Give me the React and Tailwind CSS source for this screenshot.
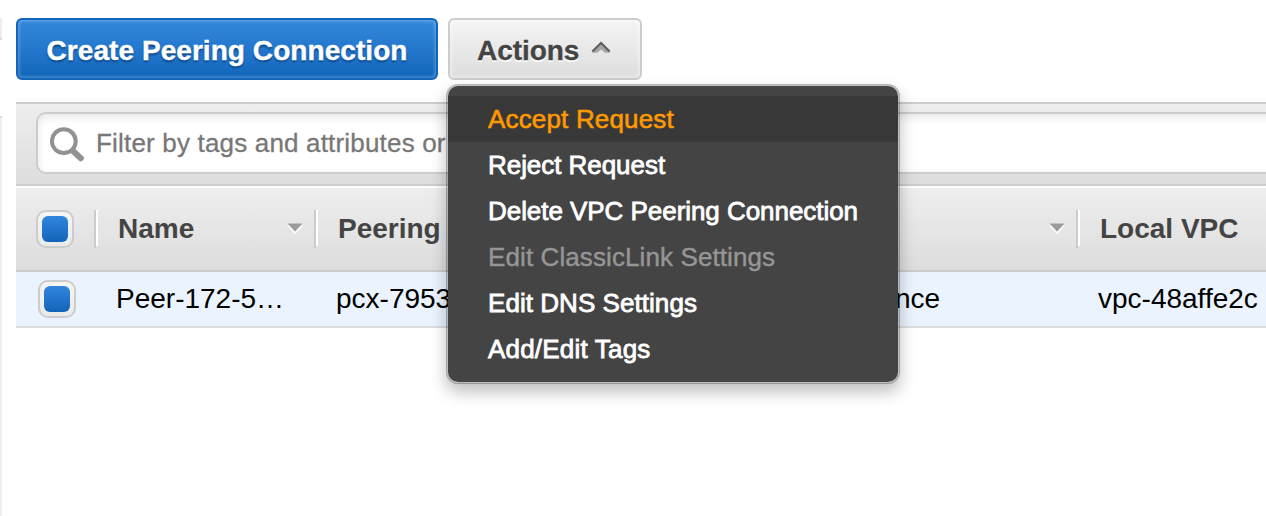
import React from "react";

const menuItems = [
  { label: "Accept Request", style: "bg-[#383838] text-[#ff9900] tracking-[0.17px] [-webkit-text-stroke:0.6px_#ff9900]" },
  { label: "Reject Request", style: "text-white tracking-[-0.05px] [-webkit-text-stroke:0.8px_white]" },
  { label: "Delete VPC Peering Connection", style: "text-white tracking-[-0.05px] [-webkit-text-stroke:0.8px_white]" },
  { label: "Edit ClassicLink Settings", style: "text-[#969696] tracking-[0.1px] [-webkit-text-stroke:0.4px_#969696]" },
  { label: "Edit DNS Settings", style: "text-white tracking-[0.05px] [-webkit-text-stroke:0.8px_white]" },
  { label: "Add/Edit Tags", style: "text-white tracking-[0.2px] [-webkit-text-stroke:0.8px_white]" },
];

function Checkbox() {
  return (
    <div className="flex size-[38px] shrink-0 items-center justify-center rounded-[10px] border-2 border-[#cccccc] bg-linear-to-b from-[#f6f6f6] to-[#eaeaea]">
      <div className="size-[26px] rounded-[6px] bg-linear-to-b from-[#3186dd] to-[#1264bb]" />
    </div>
  );
}

function SortArrow() {
  return (
    <svg className="shrink-0" width="16" height="12" viewBox="0 0 16 12">
      <path d="M0 2.2H16L8 11.5Z" fill="#fafafa" />
      <path d="M0.5 0.5H15.5L8 8.5Z" fill="#9b9b9b" />
    </svg>
  );
}

function Divider() {
  return (
    <div className="flex h-[38px] w-1 shrink-0">
      <div className="h-[38px] w-0.5 bg-[#cccccc]" />
      <div className="h-9 w-0.5 bg-white" />
    </div>
  );
}

function ActionsMenu() {
  return (
    <div className="absolute top-[66px] -left-0.5 z-10 w-[454px] rounded-[12px] border-2 border-black/25 bg-[#444444] bg-clip-padding py-[10px] shadow-[0_8px_16px_rgba(0,0,0,0.25)]">
      {menuItems.map((item) => (
        <div key={item.label} className={`h-[46px] pl-10 text-[26px] leading-[46px] font-normal whitespace-nowrap ${item.style}`}>
          {item.label}
        </div>
      ))}
    </div>
  );
}

export default function App() {
  return (
    <div className="flex h-[516px] w-[1266px] overflow-hidden bg-white font-['Liberation_Sans',Arial,sans-serif]">
      <aside className="flex w-4 shrink-0 flex-col pt-[18px]">
        <div className="h-[22px] w-0.5 border-b-2 border-[#dddddd] bg-[#eeeeee]" />
        <div className="mt-[76px] w-0.5 flex-1 border-t-2 border-[#dddddd] bg-[#eeeeee]" />
      </aside>

      <main className="w-[1250px] shrink-0 pt-[18px]">
        <div className="flex gap-[10px]">
          <button className="h-[62px] w-[422px] rounded-[6px] border-2 border-[#1166bb] bg-linear-to-b from-[#3388dd] to-[#1166bb] pt-1 text-[28px] font-bold tracking-[0.06px] whitespace-nowrap text-white shadow-[inset_0_0_4px_rgba(255,255,255,0.45)] [-webkit-text-stroke:0.4px_white] [text-shadow:0_2px_2px_#0a4484]">
            Create Peering Connection
          </button>
          <div className="relative">
            <button className="flex h-[62px] w-[194px] items-center rounded-[6px] border-2 border-[#cccccc] bg-linear-to-b from-[#f5f5f5] to-[#dddddd] pl-[27px] text-[28px] font-bold text-[#444444] shadow-[inset_0_0_5px_rgba(255,255,255,0.8)] [text-shadow:0_2px_0_white]">
              <span className="pt-1 tracking-[-0.05px] [-webkit-text-stroke:0.3px_#444444]">Actions</span>
              <svg className="mb-1 ml-3" width="20" height="14" viewBox="0 0 20 14">
                <path d="M1 12.8L10 4L19 12.8H14L10 9.5L6 12.8Z" fill="#a6a6a6" />
                <path d="M1.3 11.5L10 3L18.7 11.5" fill="none" stroke="#5e5e5e" strokeWidth="2.2" />
              </svg>
            </button>
            <ActionsMenu />
          </div>
        </div>

        <section className="mt-[22px] border-y-2 border-[#cccccc]">
          <div className="h-20 bg-linear-to-b from-[#eeeeee] to-[#dddddd] pt-2 pl-5">
            <div className="flex h-[62px] w-[1260px] items-center rounded-[10px] border-2 border-[#cccccc] bg-white pl-3 shadow-[inset_0_3px_8px_rgba(0,0,0,0.1)]">
              <svg className="mt-[3px] shrink-0" width="35" height="35" viewBox="0 0 35 35">
                <path d="M21.5 22.5L30.8 31.2" stroke="#929292" strokeWidth="6" strokeLinecap="round" />
                <circle cx="13.8" cy="14.2" r="11.9" fill="white" stroke="#929292" strokeWidth="4" />
              </svg>
              <span className="ml-[11px] text-[26px] tracking-[0.18px] whitespace-nowrap text-[#777777] [-webkit-text-stroke:0.3px_#777777]">
                Filter by tags and attributes or
              </span>
            </div>
          </div>
        </section>

        <section className="border-t-2 border-white text-[28px] whitespace-nowrap">
          <div className="flex h-[84px] items-center border-b-2 border-[#cccccc] bg-linear-to-b from-[#eeeeee] to-[#dddddd] pl-5 font-bold text-[#444444]">
            <Checkbox />
            <div className="ml-5"><Divider /></div>
            <span className="ml-5 w-[169px]">Name</span>
            <SortArrow />
            <div className="ml-[11px]"><Divider /></div>
            <span className="ml-5 w-[711px]">Peering</span>
            <SortArrow />
            <div className="ml-[11px]"><Divider /></div>
            <span className="ml-5">Local VPC</span>
          </div>
          <div className="flex h-14 items-center border-b-2 border-[#dddddd] bg-[#eaf3fe] pl-[22px] text-black">
            <Checkbox />
            <span className="ml-10 w-[220px]">Peer-172-5…</span>
            <span className="w-[480px]">pcx-7953</span>
            <span className="w-[282px] pl-[79px]">nce</span>
            <span>vpc-48affe2c</span>
          </div>
        </section>
      </main>
    </div>
  );
}
